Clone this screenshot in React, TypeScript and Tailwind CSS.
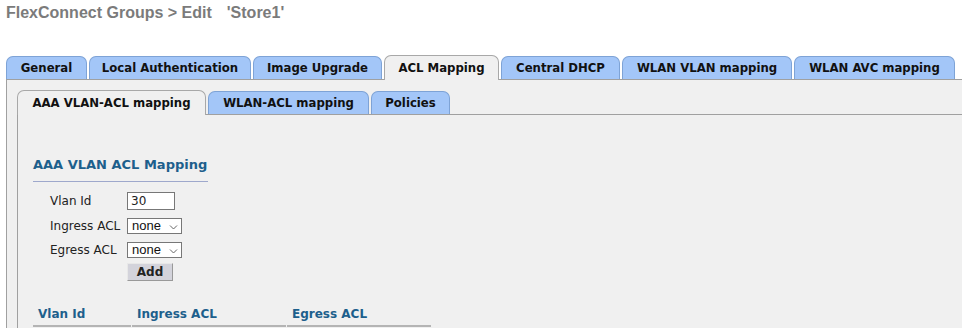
const outerTabs = [
  { label: 'General', w: 'w-[81px]' },
  { label: 'Local Authentication', w: 'w-[162px]' },
  { label: 'Image Upgrade', w: 'w-[129px]' },
  { label: 'ACL Mapping', w: 'w-[115px]', active: true },
  { label: 'Central DHCP', w: 'w-[119px]' },
  { label: 'WLAN VLAN mapping', w: 'w-[170px]' },
  { label: 'WLAN AVC mapping', w: 'w-[161px]' },
]

const innerTabs = [
  { label: 'AAA VLAN-ACL mapping', w: 'w-[189px]', active: true },
  { label: 'WLAN-ACL mapping', w: 'w-[161px]' },
  { label: 'Policies', w: 'w-[79px]' },
]

function Tab({ label, w, active }: { label: string; w: string; active?: boolean }) {
  return (
    <div
      className={
        active
          ? `${w} h-[25px] -mb-px flex items-center justify-center rounded-t-[7px] border border-b-0 border-[#a8a8a8] bg-[#f0f0f0] font-['DejaVu_Sans_Condensed','DejaVu_Sans',sans-serif] text-[13px] font-bold text-[#111]`
          : `${w} h-[23px] flex items-center justify-center rounded-t-[7px] border border-b-0 border-[#7ea3d6] bg-[#a3c6f8] font-['DejaVu_Sans_Condensed','DejaVu_Sans',sans-serif] text-[13px] font-bold text-[#111]`
      }
    >
      {label}
    </div>
  )
}

function Select() {
  return (
    <div className="flex h-[16px] w-[55px] items-center justify-between border border-[#777] bg-white pl-[4px] pr-[3px] font-['Liberation_Sans',sans-serif] text-[13px] text-[#111]">
      <span className="leading-none">none</span>
      <svg width="9" height="6" viewBox="0 0 9 6" className="mt-[2px]">
        <path d="M1 1.5 L4.5 5 L8 1.5" fill="none" stroke="#666" strokeWidth="1" />
      </svg>
    </div>
  )
}

export default function App() {
  return (
    <div className="h-[328px] w-[962px] overflow-hidden bg-white font-['DejaVu_Sans',Verdana,sans-serif]">
      <div className="pl-[6px] pt-[1px] font-['Liberation_Sans',Arial,sans-serif] text-[16px] font-bold leading-[24px] text-[#7b7b7b]">
        FlexConnect Groups &gt; Edit<span className="ml-[15px]">'Store1'</span>
      </div>

      <div className="mt-[30px] flex items-end gap-[2px] pl-[6px]">
        {outerTabs.map((t) => (
          <Tab key={t.label} {...t} />
        ))}
      </div>

      <div className="ml-[6px] h-[300px] border-l border-t border-[#a0a0a0] bg-[#f0f0f0] pl-[10px] pt-[10px]">
        <div className="flex items-end gap-[2px]">
          {innerTabs.map((t) => (
            <Tab key={t.label} {...t} />
          ))}
        </div>
        <div className="h-[250px] border-l border-t border-[#a0a0a0] pl-[15px] pt-[40px]">
          <div className="w-[175px] border-b border-[#9ea8cc] pb-[6px] text-[13px] font-bold text-[#1d5f8c]">
            AAA VLAN ACL Mapping
          </div>
          <div className="mt-[10px] grid grid-cols-[77px_auto] items-center gap-y-[8px] pl-[17px] text-[12px] leading-[16px] text-[#222]">
            <span>Vlan Id</span>
            <div className="flex h-[18px] w-[48px] items-center border border-[#777] bg-white pl-[3px] text-[12px]">30</div>
            <span>Ingress ACL</span>
            <Select />
            <span>Egress ACL</span>
            <Select />
          </div>
          <div className="ml-[94px] mt-[5px] flex h-[18px] w-[46px] items-center justify-center border border-[#e8e8e8] border-b-[#999] border-r-[#999] bg-[#d3d3db] text-[12px] font-bold text-[#222]">
            Add
          </div>
          <div className="mt-[24px] flex text-[12px] font-bold text-[#1d5f8c]">
            <div className="w-[98px] border-b-2 border-[#b4b4b4] pb-[2px] pl-[5px]">Vlan Id</div>
            <div className="ml-px w-[154px] border-b-2 border-[#b4b4b4] pb-[2px] pl-[5px]">Ingress ACL</div>
            <div className="ml-px w-[144px] border-b-2 border-[#b4b4b4] pb-[2px] pl-[5px]">Egress ACL</div>
          </div>
        </div>
      </div>
    </div>
  )
}
